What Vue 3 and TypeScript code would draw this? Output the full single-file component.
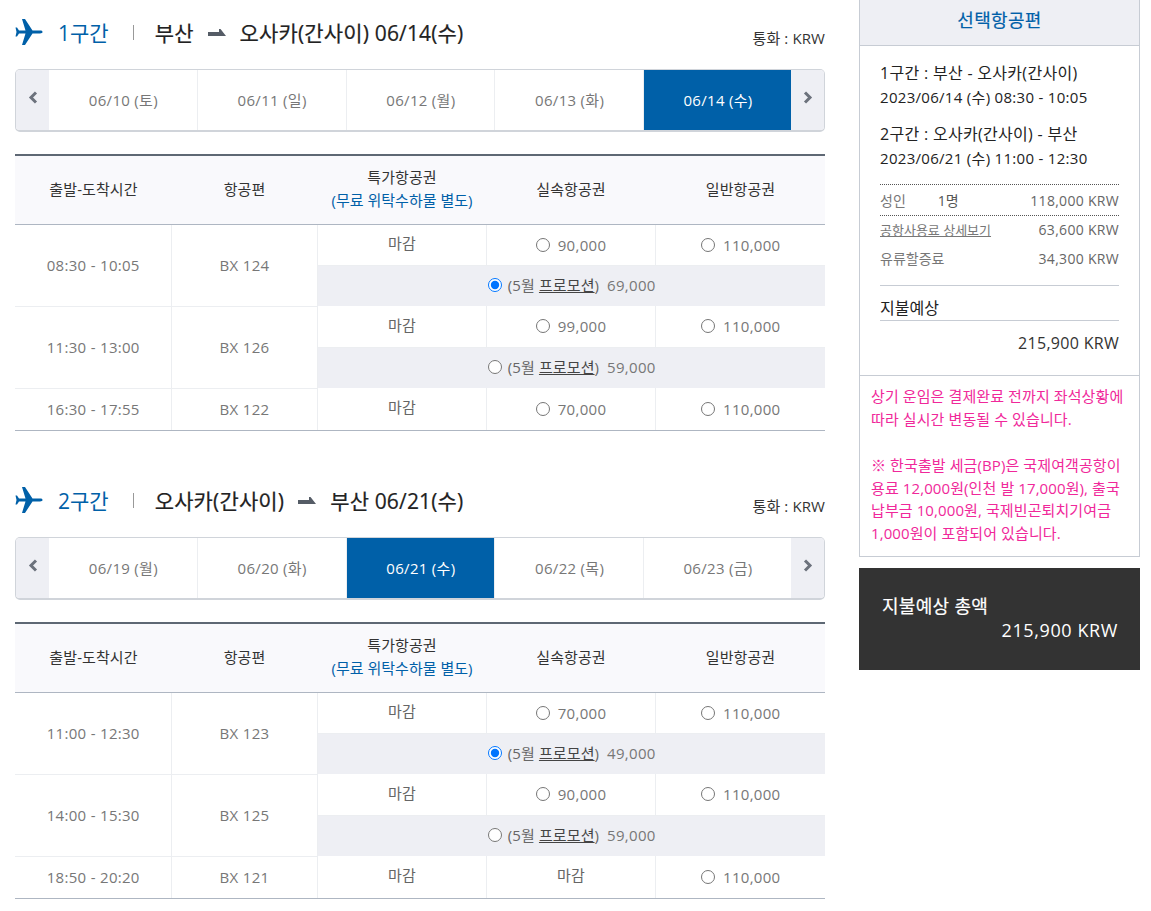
<script setup lang="ts">
interface Fare {
  closed?: boolean
  price?: string
}

interface Flight {
  time: string
  no: string
  saver: string
  fast: Fare
  normal: Fare
  promo?: { price: string; checked: boolean }
}

interface Leg {
  id: string
  label: string
  from: string
  to: string
  date: string
  days: { text: string; active?: boolean }[]
  flights: Flight[]
}

const legs: Leg[] = [
  {
    id: 'leg1',
    label: '1구간',
    from: '부산',
    to: '오사카(간사이)',
    date: '06/14(수)',
    days: [
      { text: '06/10 (토)' },
      { text: '06/11 (일)' },
      { text: '06/12 (월)' },
      { text: '06/13 (화)' },
      { text: '06/14 (수)', active: true }
    ],
    flights: [
      { time: '08:30 - 10:05', no: 'BX 124', saver: '마감', fast: { price: '90,000' }, normal: { price: '110,000' }, promo: { price: '69,000', checked: true } },
      { time: '11:30 - 13:00', no: 'BX 126', saver: '마감', fast: { price: '99,000' }, normal: { price: '110,000' }, promo: { price: '59,000', checked: false } },
      { time: '16:30 - 17:55', no: 'BX 122', saver: '마감', fast: { price: '70,000' }, normal: { price: '110,000' } }
    ]
  },
  {
    id: 'leg2',
    label: '2구간',
    from: '오사카(간사이)',
    to: '부산',
    date: '06/21(수)',
    days: [
      { text: '06/19 (월)' },
      { text: '06/20 (화)' },
      { text: '06/21 (수)', active: true },
      { text: '06/22 (목)' },
      { text: '06/23 (금)' }
    ],
    flights: [
      { time: '11:00 - 12:30', no: 'BX 123', saver: '마감', fast: { price: '70,000' }, normal: { price: '110,000' }, promo: { price: '49,000', checked: true } },
      { time: '14:00 - 15:30', no: 'BX 125', saver: '마감', fast: { price: '90,000' }, normal: { price: '110,000' }, promo: { price: '59,000', checked: false } },
      { time: '18:50 - 20:20', no: 'BX 121', saver: '마감', fast: { closed: true }, normal: { price: '110,000' } }
    ]
  }
]
</script>

<template>
  <div class="page">
    <main class="main">
      <section v-for="leg in legs" :key="leg.id" class="leg">
        <div class="leg-head">
          <svg class="plane" width="28" height="26" viewBox="0 0 28 26">
            <path d="M27.5 13c0-1-1-1.400-2.500-1.400h-7.500L10 0H7l3.500 11.600H4L2 8.500H.5L1.500 13 .5 17.500H2l2-3.100h6.500L7 26h3l7.500-11.600H25c1.500 0 2.500-.4 2.500-1.400z" fill="#0060a8" />
          </svg>
          <span class="leg-label">{{ leg.label }}</span>
          <span class="leg-sep"></span>
          <h2 class="route">
            <span>{{ leg.from }}</span>
            <svg class="arrow" width="18" height="7" viewBox="0 0 18 7">
              <path d="M0 3h11V0h1.500L18 7H0z" fill="#555c66" />
            </svg>
            <span>{{ leg.to }} {{ leg.date }}</span>
          </h2>
          <span class="currency">통화 : KRW</span>
        </div>

        <div class="dates">
          <button class="nav" type="button" aria-label="이전">
            <svg width="10" height="13" viewBox="0 0 10 13">
              <path d="M8 1.500 3 6.500l5 5" fill="none" stroke="#6c727c" stroke-width="3" />
            </svg>
          </button>
          <a v-for="day in leg.days" :key="day.text" class="day" :class="{ active: day.active }">{{ day.text }}</a>
          <button class="nav" type="button" aria-label="다음">
            <svg width="10" height="13" viewBox="0 0 10 13">
              <path d="m2 1.500 5 5-5 5" fill="none" stroke="#6c727c" stroke-width="3" />
            </svg>
          </button>
        </div>

        <table class="fares">
          <colgroup>
            <col style="width: 156px" />
            <col style="width: 146px" />
            <col style="width: 169px" />
            <col style="width: 169px" />
            <col style="width: 170px" />
          </colgroup>
          <thead>
            <tr>
              <th>출발-도착시간</th>
              <th>항공편</th>
              <th>특가항공권<br /><em>(무료 위탁수하물 별도)</em></th>
              <th>실속항공권</th>
              <th>일반항공권</th>
            </tr>
          </thead>
          <tbody>
            <template v-for="flight in leg.flights" :key="flight.no">
              <tr :class="{ single: !flight.promo }">
                <td class="info" :rowspan="flight.promo ? 2 : 1">{{ flight.time }}</td>
                <td class="info" :rowspan="flight.promo ? 2 : 1">{{ flight.no }}</td>
                <td class="closed">{{ flight.saver }}</td>
                <td v-if="flight.fast.closed" class="closed">마감</td>
                <td v-else class="price">
                  <label class="fare">
                    <input type="radio" :name="leg.id" />
                    <span>{{ flight.fast.price }}</span>
                  </label>
                </td>
                <td class="price">
                  <label class="fare">
                    <input type="radio" :name="leg.id" />
                    <span>{{ flight.normal.price }}</span>
                  </label>
                </td>
              </tr>
              <tr v-if="flight.promo" class="promo">
                <td colspan="3">
                  <label class="fare">
                    <input type="radio" :name="leg.id" :checked="flight.promo.checked" />
                    <span class="promo-name">(5월 <u>프로모션</u>)</span>
                    <span>{{ flight.promo.price }}</span>
                  </label>
                </td>
              </tr>
            </template>
          </tbody>
        </table>
      </section>
    </main>

    <aside class="side">
      <div class="panel">
        <h3 class="panel-title">선택항공편</h3>
        <div class="panel-body">
          <p class="seg">1구간 : 부산 - 오사카(간사이)</p>
          <p class="seg-time">2023/06/14 (수) 08:30 - 10:05</p>
          <p class="seg second">2구간 : 오사카(간사이) - 부산</p>
          <p class="seg-time">2023/06/21 (수) 11:00 - 12:30</p>

          <div class="price-row adult">
            <span>성인</span>
            <span class="count">1명</span>
            <span class="amount">118,000 KRW</span>
          </div>
          <div class="price-row tax">
            <a>공항사용료 상세보기</a>
            <span class="amount">63,600 KRW</span>
          </div>
          <div class="price-row fuel">
            <span>유류할증료</span>
            <span class="amount">34,300 KRW</span>
          </div>

          <div class="expect">지불예상</div>
          <div class="expect-total">215,900 KRW</div>
        </div>
        <div class="notice">
          <p>상기 운임은 결제완료 전까지 좌석상황에<br />따라 실시간 변동될 수 있습니다.</p>
          <p>※ 한국출발 세금(BP)은 국제여객공항이<br />용료 12,000원(인천 발 17,000원), 출국<br />납부금 10,000원, 국제빈곤퇴치기여금<br />1,000원이 포함되어 있습니다.</p>
        </div>
      </div>

      <div class="total">
        <div class="total-label">지불예상 총액</div>
        <div class="total-price">215,900 KRW</div>
      </div>
    </aside>
  </div>
</template>

<style>
html,
body {
  background: #fff;
}
</style>

<style scoped>
.page {
  display: flex;
  gap: 34px;
  width: 1125px;
  padding-left: 15px;
  font-family: "Open Sans", "Noto Sans CJK KR", sans-serif;
  font-size: 15px;
  letter-spacing: 0.3px;
  color: #333;
}
.main {
  width: 810px;
}
.leg {
  height: 468px;
}
.leg-head {
  display: flex;
  align-items: center;
  height: 69px;
  padding-bottom: 5px;
  box-sizing: border-box;
}
.plane {
  flex: none;
}
.leg-label {
  margin-left: 15px;
  font-size: 21px;
  letter-spacing: 0;
  color: #0060a8;
}
.leg-sep {
  width: 1px;
  height: 15px;
  margin: 0 21px 0 24px;
  background: #999;
}
.route {
  display: flex;
  align-items: center;
  gap: 14px;
  margin: 0;
  font-size: 21px;
  font-weight: 400;
  letter-spacing: 0.15px;
  color: #222;
  -webkit-text-stroke: 0.2px #222;
}
.currency {
  margin-left: auto;
  padding-top: 10px;
  letter-spacing: 0.1px;
}
.dates {
  display: flex;
  height: 63px;
  box-sizing: border-box;
  border: 1px solid #d0d4da;
  border-bottom-width: 2px;
  border-radius: 5px;
  overflow: hidden;
}
.nav {
  flex: none;
  width: 33px;
  padding: 0 0 2px;
  border: 0;
  background: #eeeff4;
}
.day {
  flex: none;
  width: 148.75px;
  box-sizing: border-box;
  display: flex;
  align-items: center;
  justify-content: center;
  padding: 0 0 2px 1px;
  border-right: 1px solid #eceef1;
  color: #777;
}
.day:nth-last-child(2) {
  flex: 1;
  width: auto;
  border-right: 0;
}
.day.active {
  background: #0060a8;
  color: #fff;
}
.fares {
  width: 810px;
  margin-top: 22px;
  table-layout: fixed;
  border-collapse: collapse;
  border-top: 2px solid #5e6874;
  border-bottom: 1px solid #aeb6c2;
  text-align: center;
}
.fares th {
  height: 69px;
  padding: 0 0 1px 1px;
  box-sizing: border-box;
  background: #f9f9fc;
  border-bottom: 1px solid #aeb6c2;
  font-weight: 400;
  line-height: 23px;
  letter-spacing: 0.1px;
  color: #333;
}
.fares em {
  font-style: normal;
  letter-spacing: 0;
  color: #0060a8;
}
.fares td {
  height: 41px;
  padding: 0 0 0 1px;
  box-sizing: border-box;
  border-right: 1px solid #eceef1;
  border-bottom: 1px solid #eceef1;
  color: #777;
}
.fares td:last-child {
  border-right: 0;
}
.fares td.info {
  padding-bottom: 1px;
}
.fares td.closed {
  padding-bottom: 4px;
  color: #666;
}
.fares td.price {
  padding-top: 1px;
}
.fares .single td {
  height: 42px;
  border-bottom-color: #aeb6c2;
}
.fare {
  display: inline-flex;
  align-items: center;
  gap: 8px;
}
.fare input {
  flex: none;
  width: 14px;
  height: 14px;
  margin: 0;
}
.fares .promo td {
  padding: 0 0 2px 1px;
  background: #eeeff4;
  border: 0;
}
.promo .fare {
  gap: 0;
}
.promo-name {
  margin: 0 8px 0 6px;
  letter-spacing: 0.1px;
  color: #666;
}
.promo-name u {
  color: #444;
}
.side {
  width: 281px;
}
.panel {
  box-sizing: border-box;
  height: 557px;
  border: 1px solid #c7ccd4;
  border-top: 0;
}
.panel-title {
  height: 46px;
  margin: 0;
  padding-bottom: 7px;
  box-sizing: border-box;
  display: flex;
  align-items: center;
  justify-content: center;
  background: #eeeff4;
  border-bottom: 1px solid #c7ccd4;
  font-size: 18px;
  font-weight: 400;
  color: #0060a8;
  -webkit-text-stroke: 0.2px #0060a8;
}
.panel-body {
  height: 329px;
  box-sizing: border-box;
  padding: 16px 20px 0 20px;
}
.panel-body p {
  margin: 0;
}
.seg {
  font-size: 16px;
  line-height: 22px;
  color: #222;
}
.panel-body .seg.second {
  margin-top: 15px;
}
.panel-body .seg-time {
  margin-top: 2px;
  line-height: 22px;
  color: #222;
}
.price-row {
  display: flex;
  align-items: center;
  font-size: 14px;
  letter-spacing: 0;
  color: #777;
}
.price-row a {
  font-size: 13px;
  text-decoration: underline;
}
.adult {
  margin-top: 15px;
  height: 30px;
  border-top: 1px dotted #555;
  border-bottom: 1px dotted #555;
}
.tax {
  height: 26px;
}
.fuel {
  height: 32px;
}
.count {
  margin-left: 32px;
  color: #555;
}
.amount {
  margin-left: auto;
  letter-spacing: 0.3px;
  color: #666;
}
.expect {
  margin-top: 11px;
  height: 36px;
  border-top: 1px solid #c7ccd4;
  border-bottom: 1px solid #c7ccd4;
  box-sizing: border-box;
  line-height: 44px;
  font-size: 16px;
  letter-spacing: 0;
  color: #222;
  overflow: hidden;
}
.expect-total {
  margin-top: 11px;
  text-align: right;
  font-size: 16px;
  color: #333;
}
.notice {
  box-sizing: border-box;
  height: 181px;
  padding: 9px 0 0 11px;
  border-top: 1px solid #c7ccd4;
  color: #f0289a;
  letter-spacing: 0.1px;
  line-height: 22.5px;
}
.notice p {
  margin: 0 0 24px;
}
.total {
  box-sizing: border-box;
  height: 102px;
  margin-top: 11px;
  padding: 26px 22px 0 23px;
  background: #333;
  color: #fff;
  font-size: 18px;
}
.total-label {
  line-height: 24px;
  -webkit-text-stroke: 0.2px #fff;
}
.total-price {
  text-align: right;
  line-height: 24px;
  letter-spacing: 0.6px;
}
</style>
